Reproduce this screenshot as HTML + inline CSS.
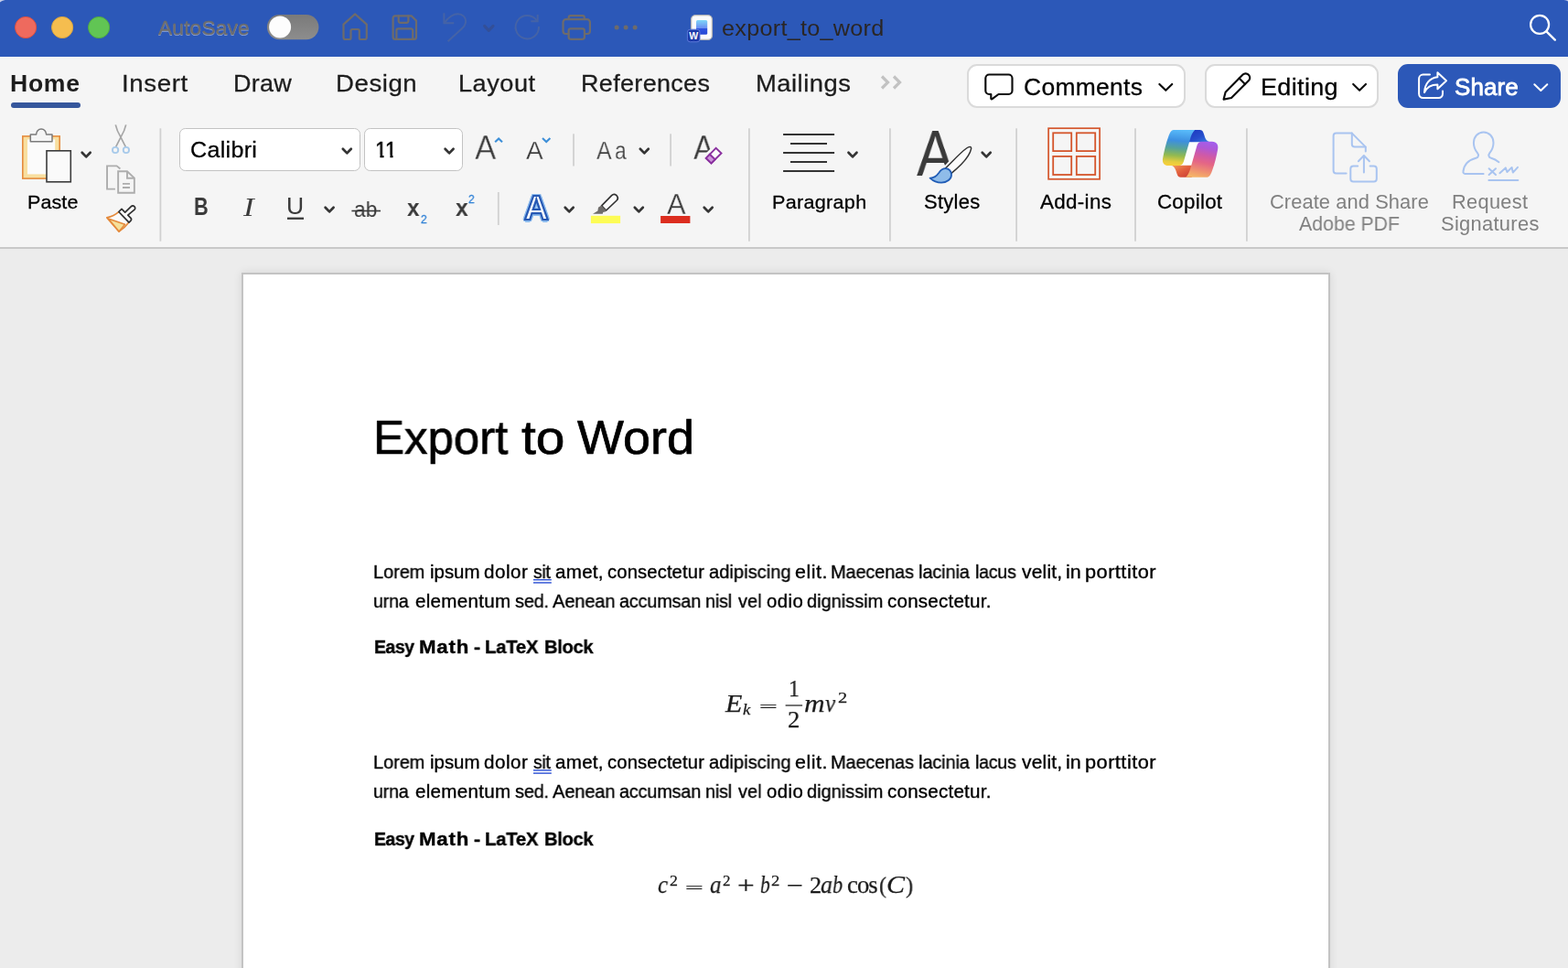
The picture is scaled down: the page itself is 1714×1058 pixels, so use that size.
<!DOCTYPE html>
<html lang="en">
<head>
<meta charset="utf-8">
<title>export_to_word</title>
<style>
html,body{margin:0;padding:0}
body{width:1714px;height:1058px;overflow:hidden;position:relative;background:#ececec;
  font-family:"Liberation Sans",sans-serif;color:#1d1d1d}
.t{will-change:transform;position:absolute;white-space:nowrap;line-height:1;margin:0;padding:0;font-weight:400}
.b{font-weight:700}
.ic{color:#3a3a3a}
.thin{-webkit-text-stroke:.55px #f5f5f5}
.thin2{-webkit-text-stroke:.3px #f5f5f5}
.dis{color:#808080}
.d{color:#000;-webkit-text-stroke:.36px #000}
.ttl{-webkit-text-stroke:.7px #000}
h1,h2,p{margin:0}
.m{font-family:"Liberation Serif",serif;color:#1c1c1c;-webkit-text-stroke:.25px #1c1c1c}
.i{font-style:italic}
h2.b{font-weight:700}
.med{-webkit-text-stroke:.28px currentColor}
svg{position:absolute;left:0;top:0;overflow:visible}
.bg{position:absolute;left:0;width:1714px}
#titlebar .bg{top:0;height:62px;background:#2c58b8}
#tabs .bg{top:62px;height:68px;background:#f5f5f5}
#ribbon .bg{top:130px;height:140px;background:#f5f5f5;border-bottom:2px solid #c9c9c9}
#doc .bg{top:272px;height:786px;background:#ececec}
#page{position:absolute;left:264px;top:298px;width:1186px;height:800px;background:#fff;border:2px solid #c3c3c3;margin:0;box-shadow:0 0 9px rgba(0,0,0,.10)}
.btn{position:absolute;top:70px;height:44px;border-radius:11px;background:#fff;border:2px solid #dadada}
.combo{position:absolute;top:140px;height:45.4px;border-radius:6.5px;background:#fff;border:1px solid #c3c3c3}
</style>
</head>
<body>
<header id="titlebar">
<div class="bg"></div>
<svg width="1714" height="62" viewBox="0 0 1714 62" aria-hidden="true">
  <defs>
    <linearGradient id="gTrack" x1="0" y1="0" x2="0" y2="1"><stop offset="0" stop-color="#7a7a7a"/><stop offset="1" stop-color="#8d8d8d"/></linearGradient>
    <linearGradient id="gDoc" x1="0" y1="0" x2="0" y2="1"><stop offset="0" stop-color="#7fd6f8"/><stop offset=".55" stop-color="#6b8ff2"/><stop offset=".56" stop-color="#2f55e0"/><stop offset="1" stop-color="#2447d6"/></linearGradient>
  </defs>
  <path d="M0 0 H5.6 C3.2 .5 1.2 1.4 0 2.6 Z" fill="#c5cdea"/><path d="M1714 0 H1709.6 C1711.4 .3 1713 .8 1714 1.4 Z" fill="#c5cdea"/>
  <circle cx="28.1" cy="30" r="11.6" fill="#ee6a5e" stroke="#e0503f" stroke-width="1"/>
  <circle cx="68.1" cy="30" r="11.6" fill="#f5bd4f" stroke="#dba53f" stroke-width="1"/>
  <circle cx="108.1" cy="30" r="11.6" fill="#61c554" stroke="#51a943" stroke-width="1"/>
  <rect x="291.9" y="16" width="56.5" height="27.2" rx="13.6" fill="url(#gTrack)"/>
  <circle cx="306.1" cy="29.4" r="12" fill="#fdfdfd"/>
  <g fill="none" stroke="#6e6b6b" stroke-width="2.2" stroke-linejoin="round" stroke-linecap="round">
    <path d="M388.1 15.4 L375.5 26.6 V41 a2 2 0 0 0 2 2 H381.9 a1.6 1.6 0 0 0 1.6 -1.6 V33.6 a1.6 1.6 0 0 1 1.6 -1.6 H391.2 a1.6 1.6 0 0 1 1.6 1.6 V41.4 a1.6 1.6 0 0 0 1.6 1.6 H398.8 a2 2 0 0 0 2 -2 V26.6 Z"/>
    <path d="M432 17.3 H449.6 L455 22.6 V40.4 a2.4 2.4 0 0 1 -2.4 2.4 H432 a2.4 2.4 0 0 1 -2.4 -2.4 V19.7 a2.4 2.4 0 0 1 2.4 -2.4 Z"/>
    <path d="M435.7 17.3 V23 a1.8 1.8 0 0 0 1.8 1.8 H444.6 a1.8 1.8 0 0 0 1.8 -1.8 V17.3"/>
    <path d="M433.4 42.8 V33.2 a1.8 1.8 0 0 1 1.8 -1.8 H449.4 a1.8 1.8 0 0 1 1.8 1.8 V42.8"/>
    <path d="M621.7 21 V19.2 a2 2 0 0 1 2 -2 H636.8 a2 2 0 0 1 2 2 V21"/>
    <path d="M621.5 37 H618.5 a3 3 0 0 1 -3 -3 V24.3 a3.2 3.2 0 0 1 3.2 -3.2 H641.7 a3.2 3.2 0 0 1 3.2 3.2 V34 a3 3 0 0 1 -3 3 H639"/>
    <rect x="621.6" y="31.4" width="17.3" height="11.4" rx="2.2"/>
  </g>
  <g fill="#6e6b6b"><circle cx="674.1" cy="30" r="2.5"/><circle cx="684.1" cy="30" r="2.5"/><circle cx="694.1" cy="30" r="2.5"/></g>
  <g fill="none" stroke="#4563a6" stroke-width="2" stroke-linecap="butt">
    <path d="M485.4 14.2 V25.2 H496.2"/>
    <path d="M486 24.6 C490.5 18.6 495.5 15.2 500.6 15.2 C505.6 15.2 509.1 18.9 509.1 23.4 C509.1 26.6 507.6 28.8 504.6 31.6 L489.6 45.2"/>
    <path d="M587.7 16 V23.3 H580.3"/>
    <path d="M587 22.8 A12.7 12.7 0 1 0 589 29"/>
  </g>
  <path d="M529.6 28.4 L534.3 33.4 L539 28.4" fill="none" stroke="#334f98" stroke-width="3.1" stroke-linecap="round" stroke-linejoin="round"/>
  <rect x="755.6" y="16.6" width="22.8" height="26.8" rx="4.5" fill="#fbfbfb" stroke="#b5b5b5" stroke-width="1.3"/>
  <rect x="761" y="22" width="12.2" height="15.8" rx="1.5" fill="url(#gDoc)"/>
  <rect x="751.4" y="32.2" width="13.6" height="13.6" rx="3" fill="#1c3aa9" stroke="#5b78d8" stroke-width="1"/>
  <text x="758.2" y="43.4" text-anchor="middle" font-family="Liberation Sans, sans-serif" font-weight="700" font-size="10.5" fill="#fff">W</text>
  <circle cx="1683.1" cy="26.9" r="10" fill="none" stroke="#fff" stroke-width="2.2"/>
  <path d="M1690.4 34.4 L1699.8 43.6" stroke="#fff" stroke-width="2.4" stroke-linecap="round"/>
</svg>
<span class="t" id="autosave" style="color:#6d6d6d;-webkit-text-stroke:.35px #6d6d6d;text-shadow:0 1.2px 0 rgba(225,232,250,.55);left:172.86px;top:20.20px;font-size:22.6px;letter-spacing:0.144px;transform:scaleX(1.0073);transform-origin:0 0">AutoSave</span>
<span class="t" id="doctitle" style="color:#2a2625;left:789.18px;top:18.70px;font-size:24.6px;letter-spacing:0.271px;transform:scaleX(1.0245);transform-origin:0 0">export_to_word</span>
</header>
<nav id="tabs">
<div class="bg"></div>
<span class="t b" id="tabHome" style="left:11.32px;top:78.00px;font-size:26px;letter-spacing:0.679px;transform:scaleX(1.0231);transform-origin:0 0">Home</span>
<span class="t med" id="tabInsert" style="left:132.87px;top:78.00px;font-size:26px;letter-spacing:0.585px;transform:scaleX(1.0630);transform-origin:0 0">Insert</span>
<span class="t med" id="tabDraw" style="left:254.93px;top:78.00px;font-size:26px;letter-spacing:0.303px;transform:scaleX(1.0367);transform-origin:0 0">Draw</span>
<span class="t med" id="tabDesign" style="left:366.88px;top:78.00px;font-size:26px;letter-spacing:0.510px;transform:scaleX(1.0622);transform-origin:0 0">Design</span>
<span class="t med" id="tabLayout" style="left:500.91px;top:78.00px;font-size:26px;letter-spacing:0.498px;transform:scaleX(1.0442);transform-origin:0 0">Layout</span>
<span class="t med" id="tabRefs" style="left:634.93px;top:78.00px;font-size:26px;letter-spacing:0.358px;transform:scaleX(1.0346);transform-origin:0 0">References</span>
<span class="t med" id="tabMail" style="left:825.90px;top:78.00px;font-size:26px;letter-spacing:0.487px;transform:scaleX(1.0523);transform-origin:0 0">Mailings</span>
<div style="position:absolute;left:12px;top:112px;width:76px;height:6px;border-radius:3px;background:#35569c"></div>
<div class="btn" style="left:1057px;width:235px"></div>
<div class="btn" style="left:1317px;width:186px"></div>
<div class="btn" style="left:1528px;width:174px;background:#2c58b8;border-color:#2c58b8"></div>
<svg width="1714" height="130" viewBox="0 0 1714 130" aria-hidden="true">
  <g fill="none" stroke="#c2c2c2" stroke-width="3.2" stroke-linecap="butt" stroke-linejoin="miter">
    <path d="M964 83.5 L970.5 90 L964 96.5"/><path d="M977 83.5 L983.5 90 L977 96.5"/>
  </g>
  <g fill="none" stroke="#0d0d0d" stroke-width="2.15" stroke-linejoin="round" stroke-linecap="round">
    <path d="M1081.3 81.5 H1102.5 a4 4 0 0 1 4 4 V99 a4 4 0 0 1 -4 4 H1091.5 L1084.6 108.2 a.8 .8 0 0 1 -1.3 -.7 V103 H1081.3 a4 4 0 0 1 -4 -4 V85.5 a4 4 0 0 1 4 -4 Z"/>
    <path d="M1267.4 92 L1274.3 98.8 L1281.2 92"/>
    <path d="M1479.2 92 L1486.1 98.8 L1493 92"/>
    <path d="M1337.6 108.6 L1339.6 100.8 L1358.6 81.6 a4.2 4.2 0 0 1 6 0 L1365 82 a4.2 4.2 0 0 1 0 6 L1346 107 Z"/>
    <path d="M1354.6 85.6 L1361 92"/>
  </g>
  <g fill="none" stroke="#fff" stroke-width="2" stroke-linejoin="round" stroke-linecap="round">
    <path d="M1677.3 92.2 L1684.3 99 L1691.3 92.2"/>
    <path d="M1563 81.6 H1555.5 a4.4 4.4 0 0 0 -4.4 4.4 V102.6 a4.4 4.4 0 0 0 4.4 4.4 H1572.6 a4.4 4.4 0 0 0 4.4 -4.4 V99.6"/>
    <path d="M1571.4 79.2 L1581 88.2 L1571.4 97.2 V92.4 C1564 92.4 1559.4 95.6 1557 101 C1557.4 91.6 1563 85 1571.4 84.2 Z"/>
  </g>
</svg>
<span class="t med" id="btnComments" style="color:#000;left:1118.98px;top:81.90px;font-size:26px;letter-spacing:0.310px;transform:scaleX(1.0159);transform-origin:0 0">Comments</span>
<span class="t med" id="btnEditing" style="color:#000;left:1377.92px;top:81.90px;font-size:26px;letter-spacing:0.318px;transform:scaleX(1.0392);transform-origin:0 0">Editing</span>
<span class="t" id="btnShare" style="color:#fff;-webkit-text-stroke:.8px #fff;left:1590.18px;top:81.80px;font-size:26px;letter-spacing:0.103px;transform:scaleX(0.9998);transform-origin:0 0">Share</span>
</nav>
<section id="ribbon">
<div class="bg"></div>
<div class="combo" style="left:196.2px;width:195.6px"></div>
<div class="combo" style="left:398.3px;width:105.4px"></div>
<svg width="1714" height="272" viewBox="0 0 1714 272" aria-hidden="true">
  <defs>
    <path id="chev" d="M-4.5 -2.3 L0 2.4 L4.5 -2.3" fill="none" stroke="#343434" stroke-width="2.7" stroke-linecap="round" stroke-linejoin="round"/>
    <linearGradient id="cpL" x1=".5" y1="0" x2=".42" y2="1"><stop offset="0" stop-color="#58baf9"/><stop offset=".3" stop-color="#3d8fe0"/><stop offset=".52" stop-color="#58a496"/><stop offset=".72" stop-color="#93ba50"/><stop offset=".9" stop-color="#e6cd3e"/><stop offset="1" stop-color="#f6cf3c"/></linearGradient>
    <linearGradient id="cpR" x1=".6" y1="0" x2=".4" y2="1"><stop offset="0" stop-color="#f5b266"/><stop offset=".2" stop-color="#ee8c72"/><stop offset=".42" stop-color="#e46586"/><stop offset=".62" stop-color="#d05aa6"/><stop offset=".82" stop-color="#b058d4"/><stop offset="1" stop-color="#a45eea"/></linearGradient>
    <linearGradient id="cpT" x1="0" y1="0" x2="1" y2="1"><stop offset="0" stop-color="#1b36be"/><stop offset=".55" stop-color="#274fcd"/><stop offset="1" stop-color="#3a82e2"/></linearGradient>
    <linearGradient id="cpB" x1="0" y1="0" x2="1" y2="1"><stop offset="0" stop-color="#c9382f"/><stop offset=".5" stop-color="#e2603e"/><stop offset="1" stop-color="#f4a25e"/></linearGradient>
  </defs>
  <!-- group separators -->
  <g fill="#d1d1d1">
    <rect x="174.5" y="140.3" width="1.8" height="123.4"/>
    <rect x="818" y="140.3" width="1.8" height="123.4"/>
    <rect x="972" y="140.3" width="1.8" height="123.4"/>
    <rect x="1110.2" y="140.3" width="1.8" height="123.4"/>
    <rect x="1240.1" y="140.3" width="1.8" height="123.4"/>
    <rect x="1362" y="140.3" width="1.8" height="123.4"/>
    <rect x="626.1" y="146.3" width="1.8" height="35.2"/>
    <rect x="732.2" y="146.3" width="1.8" height="35.2"/>
    <rect x="543.9" y="210" width="1.8" height="36"/>
  </g>
  <!-- chevrons -->
  <use href="#chev" x="94.2" y="169"/><use href="#chev" x="379.3" y="165"/><use href="#chev" x="491.1" y="165"/>
  <use href="#chev" x="360.1" y="229"/><use href="#chev" x="704.3" y="165"/><use href="#chev" x="622.2" y="229"/>
  <use href="#chev" x="698.3" y="229"/><use href="#chev" x="774.2" y="229"/><use href="#chev" x="932" y="169"/>
  <use href="#chev" x="1078.2" y="169"/>
  <!-- paste -->
  <rect x="24.8" y="148.9" width="40.4" height="46.2" fill="#f8dfa0" stroke="#e58c3f" stroke-width="1.6"/>
  <rect x="30" y="152.4" width="30.2" height="38" fill="#fbfbfb"/>
  <path d="M33.3 154.7 V147 H39.6 C39.6 143.6 42 141 45.1 141 C48.2 141 50.6 143.6 50.6 147 H57 V154.7 Z" fill="#f5f5f5" stroke="#7b7b7b" stroke-width="1.5" stroke-linejoin="round"/>
  <rect x="51" y="164.8" width="26.3" height="34" fill="#fafafa" stroke="#3b3b3b" stroke-width="1.6"/>
  <!-- cut -->
  <g fill="none">
    <path d="M126.3 136.4 Q127.8 143 131.7 149.4 L137.4 160.7 M137.7 136.4 Q136.2 143 132.3 149.4 L126.6 160.7" stroke="#a6a6a6" stroke-width="1.7"/>
    <circle cx="126.1" cy="164" r="3.15" stroke="#a8caea" stroke-width="1.9"/><circle cx="137.9" cy="164" r="3.15" stroke="#a8caea" stroke-width="1.9"/>
  </g>
  <!-- copy -->
  <g fill="none" stroke="#adadad" stroke-width="1.9">
    <path d="M125.9 206.65 H117.05 V181.35 H127.6 L131.4 184.4"/>
    <path d="M129.15 187.25 H139 L146.85 194.6 V210.75 H129.15 Z" fill="#f5f5f5"/><path d="M139 187.25 V194.7 H146.85"/>
    <path d="M134 200.9 H142 M134 205 H142"/>
  </g>
  <!-- format painter -->
  <g stroke-linejoin="round">
    <path d="M129.6 231.6 C126 235 121 237 116.8 237.9 L130.1 253.2 C134.5 250.4 138 246.8 140.8 243" fill="#fbfbfb" stroke="#e48a3c" stroke-width="1.6"/>
    <path d="M118.4 238.9 L136.6 245.2 L130.1 253 Z" fill="#f5e09a" stroke="#e48a3c" stroke-width="1.6"/>
    <path d="M129.8 231.5 L133 228.4 L136.7 232.1 L143.4 225.6 a2.4 2.4 0 0 1 3.4 0 L147 225.8 a2.4 2.4 0 0 1 0 3.4 L139.8 235.2 L142.8 238.2 a2.3 2.3 0 0 1 0 3.2 L141 243.1 Z" fill="#fbfbfb" stroke="#2f2f2f" stroke-width="1.7"/>
  </g>
  <!-- underline / strike marks -->
  <rect x="314" y="237.6" width="18" height="2.3" fill="#3a3a3a"/>
  <rect x="384.4" y="229.7" width="31.6" height="1.6" fill="#3a3a3a"/>
  <!-- grow / shrink carets -->
  <g fill="none" stroke="#3d8fd8" stroke-width="2.1" stroke-linejoin="miter">
    <path d="M541.2 155.2 L545.1 151.4 L549 155.2"/><path d="M593 151 L597.2 155 L601.4 151"/>
  </g>
  <!-- highlighter -->
  <rect x="645.9" y="235.8" width="32.2" height="8.3" fill="#fdfc55"/>
  <path d="M657.6 224.9 L668.6 213.6 C670 212.2 672 212 673.4 213.2 L674.4 214.2 C675.6 215.6 675.5 217.6 674.2 219 L662.6 230 Z" fill="#fbfbfb" stroke="#333" stroke-width="1.7" stroke-linejoin="round"/>
  <path d="M657.3 224.6 L662.8 230.2 L662.1 231.3 L659.2 232.1 L658.8 233.8 L648 233.8 L653.4 230.6 L654 226.7 Z" fill="#6e6c6a"/>
  <!-- font colour -->
  <rect x="722.1" y="236" width="32.3" height="8" fill="#dc2d1f"/>
  <!-- paragraph -->
  <g stroke="#333" stroke-width="2" fill="none">
    <path d="M856.1 146.9 H912.1 M864 156.9 H904 M856.1 167 H912.1 M864 177 H904 M856.1 187.1 H912.1"/>
  </g>
  <!-- add-ins -->
  <g fill="none" stroke="#d4562c">
    <rect x="1146.1" y="140.2" width="56" height="55.6" stroke-width="1.7"/>
    <g stroke-width="1.8"><rect x="1151.2" y="145.3" width="20" height="19.8"/><rect x="1176.8" y="145.3" width="20.4" height="19.8"/><rect x="1151.2" y="170.9" width="20" height="20.1"/><rect x="1176.8" y="170.9" width="20.4" height="20.1"/></g>
  </g>
  <!-- copilot -->
  <g>
    <path d="M1299.6 155 L1310.8 155 L1302.8 181.2 L1289.6 181.2 Z" fill="#fdfdfd"/>
    <path d="M1299.6 142.05 H1311.8 C1314.6 142.05 1315.6 145 1316.4 147.8 C1317.6 152 1319.2 155 1323.4 155.15 H1299.6 Z" fill="url(#cpT)"/>
    <path d="M1299.6 142.05 H1311.8 C1314.6 142.05 1315.6 145 1316.4 147.8 C1317.6 152 1319.2 155 1323.4 155.15 H1299.6 Z" fill="url(#cpB)" transform="rotate(180 1301.15 167.9)"/>
    <path d="M1282.8 142.05 L1306.2 142.05 C1303.4 144.5 1301.8 148.8 1300.7 152.9 L1294.2 175.6 C1293.2 178.8 1292 181.1 1288.6 181.1 L1277.4 181.1 C1272.4 181.1 1270 177.6 1271.2 172.4 C1272.4 166 1274.4 157 1277 150 C1278.4 146 1280 142.05 1282.8 142.05 Z" fill="url(#cpL)"/>
    <path d="M1282.8 142.05 L1306.2 142.05 C1303.4 144.5 1301.8 148.8 1300.7 152.9 L1294.2 175.6 C1293.2 178.8 1292 181.1 1288.6 181.1 L1277.4 181.1 C1272.4 181.1 1270 177.6 1271.2 172.4 C1272.4 166 1274.4 157 1277 150 C1278.4 146 1280 142.05 1282.8 142.05 Z" fill="url(#cpR)" transform="rotate(180 1301.15 167.9)"/>
  </g>
  <!-- create & share pdf -->
  <g fill="none" stroke="#a9c4f0" stroke-width="2" stroke-linecap="round" stroke-linejoin="round">
    <path d="M1471.6 189.6 H1460.6 a3 3 0 0 1 -3 -3 V148.4 a3 3 0 0 1 3 -3 H1477.6 L1492.8 160.6 V165.4"/>
    <path d="M1477.8 145.6 V157.6 a3 3 0 0 0 3 3 H1492.6"/>
    <path d="M1484.2 181.6 H1479.3 a3 3 0 0 0 -3 3 V195.4 a3 3 0 0 0 3 3 H1501.8 a3 3 0 0 0 3 -3 V184.6 a3 3 0 0 0 -3 -3 H1497.6"/>
    <path d="M1490.9 188.6 V170.2 M1484.9 176.2 L1490.9 170 L1496.9 176.2"/>
  </g>
  <!-- request signatures -->
  <g fill="none" stroke="#a9c4f0" stroke-width="2" stroke-linecap="round" stroke-linejoin="round">
    <path d="M1621.6 189.9 H1601.4 a2 2 0 0 1 -2 -2.4 C1600.4 179.6 1606.4 174.6 1613.4 172.8 C1616.4 172 1616.6 169.2 1615 167.2 C1612.4 164 1610.9 160.2 1610.9 156 C1610.9 149.4 1615.6 144.4 1621.7 144.4 C1627.8 144.4 1632.5 149.4 1632.5 156 C1632.5 160.2 1631 164 1628.4 167.2 C1626.8 169.2 1627 172 1630 172.8 C1633 173.6 1636 175.2 1638.4 177.2"/>
    <path d="M1627.6 184.2 L1635 191 M1635 184.2 L1627.6 191"/>
    <path d="M1639.4 189.2 L1645.8 183.4 L1647.4 188 L1652.6 183 L1653.8 188.6 L1659 182.8"/>
    <path d="M1627.4 197.1 H1659.4"/>
  </g>
</svg>
<span class="t med" id="lblPaste" style="color:#000;left:29.97px;top:209.90px;font-size:21px;letter-spacing:0.091px;transform:scaleX(1.0251);transform-origin:0 0">Paste</span>
<span class="t med" id="fontName" style="color:#000;left:207.96px;top:151.90px;font-size:24.2px;letter-spacing:0.292px;transform:scaleX(1.0370);transform-origin:0 0">Calibri</span>
<span class="t" id="fontSize" style="color:#000;-webkit-text-stroke:.5px #000;left:409.69px;top:151.90px;font-size:24.2px;transform:scaleX(0.9344);transform-origin:0 0">11</span>
<span class="t b ic" id="icB" style="left:212.28px;top:212.40px;font-size:28px;transform:scaleX(0.7716);transform-origin:0 0">B</span>
<span class="t ic" id="icI" style="font-family:'Liberation Serif',serif;font-style:italic;left:265.61px;top:211.60px;font-size:29px;transform:scaleX(1.2096);transform-origin:0 0">I</span>
<span class="t ic" id="icU" style="left:313.12px;top:212.40px;font-size:26.5px;transform:scaleX(0.9896);transform-origin:0 0">U</span>
<span class="t ic" id="icAb" style="left:387.08px;top:217.40px;font-size:24.5px;transform:scaleX(0.9252);transform-origin:0 0">ab</span>
<span class="t b ic" id="icSubX" style="left:444.80px;top:213.90px;font-size:26.5px;transform:scaleX(0.9126);transform-origin:0 0">x</span>
<span class="t ic med" id="icSub2" style="color:#2f80d6;left:460.00px;top:233.60px;font-size:12.5px;transform:scaleX(0.9585);transform-origin:0 0">2</span>
<span class="t b ic" id="icSupX" style="left:497.60px;top:213.90px;font-size:26.5px;transform:scaleX(0.9333);transform-origin:0 0">x</span>
<span class="t ic med" id="icSup2" style="color:#2f80d6;left:512.40px;top:211.80px;font-size:12.5px;transform:scaleX(0.9585);transform-origin:0 0">2</span>
<span class="t ic thin" id="icGrow" style="left:519.32px;top:142.75px;font-size:37.2px;transform:scaleX(0.9389);transform-origin:0 0">A</span>
<span class="t ic thin2" id="icShrink" style="left:574.53px;top:149.75px;font-size:28.2px;transform:scaleX(0.9919);transform-origin:0 0">A</span>
<span class="t ic thin2" id="icCase" style="left:651.94px;top:149.75px;font-size:28.2px;transform:scaleX(0.8854);transform-origin:0 0">A</span><span class="t ic thin2" id="icCase2" style="left:671.73px;top:151.75px;font-size:27px;transform:scaleX(0.8440);transform-origin:0 0">a</span>
<span class="t ic thin2" id="icClear" style="left:757.73px;top:142.50px;font-size:37px;transform:scaleX(0.9036);transform-origin:0 0">A</span>
<span class="t b" id="icFx" style="color:#fff;-webkit-text-stroke:2.2px #2759b4;text-shadow:2.5px 0 .5px #8dbcee,-2.5px 0 .5px #8dbcee,0 2.5px .5px #8dbcee,0 -2.5px .5px #8dbcee,1.8px 1.8px .5px #8dbcee,-1.8px 1.8px .5px #8dbcee,1.8px -1.8px .5px #8dbcee,-1.8px -1.8px .5px #8dbcee;left:572.80px;top:209.60px;font-size:36px;transform:scaleX(1.0231);transform-origin:0 0">A</span>
<span class="t ic thin2" id="icColor" style="left:728.53px;top:207.75px;font-size:31.2px;transform:scaleX(0.9879);transform-origin:0 0">A</span>
<span class="t med" id="lblPara" style="color:#000;left:844.37px;top:210.00px;font-size:21px;letter-spacing:0.285px;transform:scaleX(1.0281);transform-origin:0 0">Paragraph</span>
<span class="t ic" id="icStyles" style="left:1001.80px;top:131.65px;font-size:71px;transform:scaleX(0.8581);transform-origin:0 0">A</span>
<span class="t med" id="lblStyles" style="color:#000;left:1010.10px;top:210.75px;font-size:21.5px;letter-spacing:0.279px;transform:scaleX(1.0218);transform-origin:0 0">Styles</span>
<span class="t med" id="lblAddins" style="color:#000;left:1136.66px;top:210.75px;font-size:21.5px;letter-spacing:0.312px;transform:scaleX(1.0412);transform-origin:0 0">Add-ins</span>
<span class="t med" id="lblCopilot" style="color:#000;left:1264.96px;top:210.75px;font-size:21.5px;letter-spacing:0.260px;transform:scaleX(1.0368);transform-origin:0 0">Copilot</span>
<span class="t dis" id="lblPdf1" style="left:1387.98px;top:210.75px;font-size:21.5px;letter-spacing:0.088px;transform:scaleX(1.0160);transform-origin:0 0">Create and Share</span>
<span class="t dis" id="lblPdf2" style="left:1420.00px;top:234.75px;font-size:21.5px;letter-spacing:-0.018px;transform:scaleX(0.9921);transform-origin:0 0">Adobe PDF</span>
<span class="t dis" id="lblSig1" style="left:1587.31px;top:210.75px;font-size:21.5px;letter-spacing:0.321px;transform:scaleX(1.0117);transform-origin:0 0">Request</span>
<span class="t dis" id="lblSig2" style="left:1575.00px;top:234.75px;font-size:21.5px;letter-spacing:0.287px;transform:scaleX(1.0189);transform-origin:0 0">Signatures</span>
<svg width="1714" height="272" viewBox="0 0 1714 272" aria-hidden="true" style="z-index:2">
  <path d="M410.9 169.6h4.5v3.6h-4.5z M419.6 169.6h6.8v3.6h-6.8z M429.6 169.6h4.6v3.6h-4.6z" fill="#fff"/>
  <!-- clear-format eraser (covers the cut leg of the A) -->
  <path d="M772.6 166.6 L776.6 162.4 L784 177 L771 177 Z" fill="#f5f5f5"/>
  <g stroke="#8a309f" stroke-width="1.9" stroke-linejoin="miter">
    <path d="M771.8 172.9 L782.6 161.9 L788.5 167.5 L777.5 178.4 Z" fill="#fbfbfb"/>
    <path d="M771.8 172.9 L775.9 168.7 L781.7 174.3 L777.5 178.4 Z" fill="#cb95d9"/>
  </g>
  <!-- styles brush (covers the cut leg of the A) -->
  <path d="M1032.4 181.5 L1037.7 175.8 L1048 175.8 L1048 194 L1031 194 L1031 183 Z" fill="#f5f5f5"/>
  <path d="M1033.6 183.8 C1041 176.6 1050 166.6 1056.6 162 C1059.4 160 1062 159.8 1061.6 162.6 C1060.6 167.4 1055.6 174.6 1050.6 179.8 C1047 183.4 1043.4 186.6 1040 189.4 Z" fill="#fbfbfb" stroke="#333" stroke-width="1.5" stroke-linejoin="round"/>
  <path d="M1016.6 194.6 C1021 194.8 1024 192.2 1026.4 188.8 C1028.4 185.8 1030.6 184.2 1033.6 184.2 C1037.4 184.2 1040 187.2 1040 191 C1040 195.6 1035.4 199.6 1029 199.6 C1023.6 199.6 1019.6 197.4 1016.6 194.6 Z" fill="#8fbce9" stroke="#205cb6" stroke-width="1.8" stroke-linejoin="round"/>
</svg>
</section>
<main id="doc">
<div class="bg"></div>
<article id="page"></article>
<h1 id="docTitle"><span class="t d ttl" style="left:408.29px;top:452.60px;font-size:51.8px;transform:scaleX(0.9841);transform-origin:0 0">Export</span> <span class="t d ttl" style="left:570.20px;top:452.60px;font-size:51.8px;transform:scaleX(1.0972);transform-origin:0 0">to</span> <span class="t d ttl" style="left:631.08px;top:452.60px;font-size:51.8px;transform:scaleX(1.0414);transform-origin:0 0">Word</span></h1>
<p id="p1"><span class="t d" style="left:408.02px;top:614.70px;font-size:20.3px;letter-spacing:-0.058px;transform:scaleX(0.9850);transform-origin:0 0">Lorem</span> <span class="t d" style="left:469.79px;top:614.70px;font-size:20.3px;letter-spacing:-0.005px;transform:scaleX(1.0080);transform-origin:0 0">ipsum</span> <span class="t d" style="left:528.74px;top:614.70px;font-size:20.3px;letter-spacing:0.459px;transform:scaleX(1.0179);transform-origin:0 0">dolor</span> <span class="t d" style="left:583.00px;top:614.70px;font-size:20.3px;letter-spacing:-0.221px;transform:scaleX(0.9463);transform-origin:0 0">sit</span> <span class="t d" style="left:606.66px;top:614.70px;font-size:20.3px;letter-spacing:0.223px;transform:scaleX(1.0185);transform-origin:0 0">amet,</span> <span class="t d" style="left:664.34px;top:614.70px;font-size:20.3px;letter-spacing:0.104px;transform:scaleX(0.9989);transform-origin:0 0">consectetur</span> <span class="t d" style="left:775.48px;top:614.70px;font-size:20.3px;letter-spacing:0.012px;transform:scaleX(0.9925);transform-origin:0 0">adipiscing</span> <span class="t d" style="left:868.84px;top:614.70px;font-size:20.3px;letter-spacing:0.498px;transform:scaleX(1.0576);transform-origin:0 0">elit.</span> <span class="t d" style="left:907.82px;top:614.70px;font-size:20.3px;letter-spacing:-0.145px;transform:scaleX(0.9829);transform-origin:0 0">Maecenas</span> <span class="t d" style="left:1004.22px;top:614.70px;font-size:20.3px;letter-spacing:-0.115px;transform:scaleX(0.9841);transform-origin:0 0">lacinia</span> <span class="t d" style="left:1066.23px;top:614.70px;font-size:20.3px;letter-spacing:-0.269px;transform:scaleX(0.9675);transform-origin:0 0">lacus</span> <span class="t d" style="left:1116.86px;top:614.70px;font-size:20.3px;letter-spacing:0.194px;transform:scaleX(1.0349);transform-origin:0 0">velit,</span> <span class="t d" style="left:1165.34px;top:614.70px;font-size:20.3px;letter-spacing:-0.078px;transform:scaleX(1.0575);transform-origin:0 0">in</span> <span class="t d" style="left:1186.33px;top:614.70px;font-size:20.3px;letter-spacing:0.442px;transform:scaleX(1.0723);transform-origin:0 0">porttitor</span>
<span class="t d" style="left:408.03px;top:646.70px;font-size:20.3px;letter-spacing:-0.202px;transform:scaleX(0.9671);transform-origin:0 0">urna</span> <span class="t d" style="left:453.91px;top:646.70px;font-size:20.3px;letter-spacing:0.270px;transform:scaleX(1.0167);transform-origin:0 0">elementum</span> <span class="t d" style="left:563.20px;top:646.70px;font-size:20.3px;letter-spacing:-0.254px;transform:scaleX(0.9837);transform-origin:0 0">sed.</span> <span class="t d" style="left:604.27px;top:646.70px;font-size:20.3px;letter-spacing:-0.151px;transform:scaleX(0.9891);transform-origin:0 0">Aenean</span> <span class="t d" style="left:677.08px;top:646.70px;font-size:20.3px;letter-spacing:-0.175px;transform:scaleX(0.9786);transform-origin:0 0">accumsan</span> <span class="t d" style="left:771.23px;top:646.70px;font-size:20.3px;letter-spacing:-0.116px;transform:scaleX(0.9704);transform-origin:0 0">nisl</span> <span class="t d" style="left:807.05px;top:646.70px;font-size:20.3px;letter-spacing:0.116px;transform:scaleX(0.9759);transform-origin:0 0">vel</span> <span class="t d" style="left:837.55px;top:646.70px;font-size:20.3px;letter-spacing:0.444px;transform:scaleX(1.0037);transform-origin:0 0">odio</span> <span class="t d" style="left:881.96px;top:646.70px;font-size:20.3px;letter-spacing:-0.005px;transform:scaleX(0.9868);transform-origin:0 0">dignissim</span> <span class="t d" style="left:969.92px;top:646.70px;font-size:20.3px;letter-spacing:0.202px;transform:scaleX(1.0160);transform-origin:0 0">consectetur.</span></p>
<h2 id="h2a"><span class="t d b" style="left:408.67px;top:696.80px;font-size:20.9px;letter-spacing:-0.563px;transform:scaleX(0.9344);transform-origin:0 0">Easy</span> <span class="t d b" style="left:457.53px;top:696.80px;font-size:20.9px;letter-spacing:0.735px;transform:scaleX(1.0654);transform-origin:0 0">Math</span> <span class="t d b" style="left:518.00px;top:696.80px;font-size:20.9px;transform:scaleX(1.0252);transform-origin:0 0">-</span> <span class="t d b" style="left:529.82px;top:696.80px;font-size:20.9px;letter-spacing:-0.273px;transform:scaleX(0.9750);transform-origin:0 0">LaTeX</span> <span class="t d b" style="left:594.84px;top:696.80px;font-size:20.9px;letter-spacing:-0.315px;transform:scaleX(0.9630);transform-origin:0 0">Block</span></h2>
<p id="p2"><span class="t d" style="left:408.02px;top:822.90px;font-size:20.3px;letter-spacing:-0.058px;transform:scaleX(0.9850);transform-origin:0 0">Lorem</span> <span class="t d" style="left:469.79px;top:822.90px;font-size:20.3px;letter-spacing:-0.005px;transform:scaleX(1.0080);transform-origin:0 0">ipsum</span> <span class="t d" style="left:528.74px;top:822.90px;font-size:20.3px;letter-spacing:0.459px;transform:scaleX(1.0179);transform-origin:0 0">dolor</span> <span class="t d" style="left:583.00px;top:822.90px;font-size:20.3px;letter-spacing:-0.221px;transform:scaleX(0.9463);transform-origin:0 0">sit</span> <span class="t d" style="left:606.66px;top:822.90px;font-size:20.3px;letter-spacing:0.223px;transform:scaleX(1.0185);transform-origin:0 0">amet,</span> <span class="t d" style="left:664.34px;top:822.90px;font-size:20.3px;letter-spacing:0.104px;transform:scaleX(0.9989);transform-origin:0 0">consectetur</span> <span class="t d" style="left:775.48px;top:822.90px;font-size:20.3px;letter-spacing:0.012px;transform:scaleX(0.9925);transform-origin:0 0">adipiscing</span> <span class="t d" style="left:868.84px;top:822.90px;font-size:20.3px;letter-spacing:0.498px;transform:scaleX(1.0576);transform-origin:0 0">elit.</span> <span class="t d" style="left:907.82px;top:822.90px;font-size:20.3px;letter-spacing:-0.145px;transform:scaleX(0.9829);transform-origin:0 0">Maecenas</span> <span class="t d" style="left:1004.22px;top:822.90px;font-size:20.3px;letter-spacing:-0.115px;transform:scaleX(0.9841);transform-origin:0 0">lacinia</span> <span class="t d" style="left:1066.23px;top:822.90px;font-size:20.3px;letter-spacing:-0.269px;transform:scaleX(0.9675);transform-origin:0 0">lacus</span> <span class="t d" style="left:1116.86px;top:822.90px;font-size:20.3px;letter-spacing:0.194px;transform:scaleX(1.0349);transform-origin:0 0">velit,</span> <span class="t d" style="left:1165.34px;top:822.90px;font-size:20.3px;letter-spacing:-0.078px;transform:scaleX(1.0575);transform-origin:0 0">in</span> <span class="t d" style="left:1186.33px;top:822.90px;font-size:20.3px;letter-spacing:0.442px;transform:scaleX(1.0723);transform-origin:0 0">porttitor</span>
<span class="t d" style="left:408.03px;top:854.70px;font-size:20.3px;letter-spacing:-0.202px;transform:scaleX(0.9671);transform-origin:0 0">urna</span> <span class="t d" style="left:453.91px;top:854.70px;font-size:20.3px;letter-spacing:0.270px;transform:scaleX(1.0167);transform-origin:0 0">elementum</span> <span class="t d" style="left:563.20px;top:854.70px;font-size:20.3px;letter-spacing:-0.254px;transform:scaleX(0.9837);transform-origin:0 0">sed.</span> <span class="t d" style="left:604.27px;top:854.70px;font-size:20.3px;letter-spacing:-0.151px;transform:scaleX(0.9891);transform-origin:0 0">Aenean</span> <span class="t d" style="left:677.08px;top:854.70px;font-size:20.3px;letter-spacing:-0.175px;transform:scaleX(0.9786);transform-origin:0 0">accumsan</span> <span class="t d" style="left:771.23px;top:854.70px;font-size:20.3px;letter-spacing:-0.116px;transform:scaleX(0.9704);transform-origin:0 0">nisl</span> <span class="t d" style="left:807.05px;top:854.70px;font-size:20.3px;letter-spacing:0.116px;transform:scaleX(0.9759);transform-origin:0 0">vel</span> <span class="t d" style="left:837.55px;top:854.70px;font-size:20.3px;letter-spacing:0.444px;transform:scaleX(1.0037);transform-origin:0 0">odio</span> <span class="t d" style="left:881.96px;top:854.70px;font-size:20.3px;letter-spacing:-0.005px;transform:scaleX(0.9868);transform-origin:0 0">dignissim</span> <span class="t d" style="left:969.92px;top:854.70px;font-size:20.3px;letter-spacing:0.202px;transform:scaleX(1.0160);transform-origin:0 0">consectetur.</span></p>
<h2 id="h2b"><span class="t d b" style="left:408.67px;top:906.80px;font-size:20.9px;letter-spacing:-0.563px;transform:scaleX(0.9344);transform-origin:0 0">Easy</span> <span class="t d b" style="left:457.53px;top:906.80px;font-size:20.9px;letter-spacing:0.735px;transform:scaleX(1.0654);transform-origin:0 0">Math</span> <span class="t d b" style="left:518.00px;top:906.80px;font-size:20.9px;transform:scaleX(1.0252);transform-origin:0 0">-</span> <span class="t d b" style="left:529.82px;top:906.80px;font-size:20.9px;letter-spacing:-0.273px;transform:scaleX(0.9750);transform-origin:0 0">LaTeX</span> <span class="t d b" style="left:594.84px;top:906.80px;font-size:20.9px;letter-spacing:-0.315px;transform:scaleX(0.9630);transform-origin:0 0">Block</span></h2>
<svg width="1714" height="1058" viewBox="0 0 1714 1058" aria-hidden="true">
  <g fill="#2a4fd4">
    <rect x="583" y="633" width="19.8" height="1.4"/><rect x="583" y="636.2" width="19.8" height="1.4"/>
    <rect x="583" y="841.2" width="19.8" height="1.4"/><rect x="583" y="844.4" width="19.8" height="1.4"/>
  </g>
  <rect x="858.6" y="770.4" width="18.5" height="1.2" fill="#1a1a1a"/>
</svg>
<div id="eq1" class="eq">
<span class="t m i" style="left:793.16px;top:756.10px;font-size:26.7px;transform:scaleX(1.1267);transform-origin:0 0">E</span>
<span class="t m i" style="left:812.00px;top:767.00px;font-size:17.4px;transform:scaleX(1.0778);transform-origin:0 0">k</span>
<span class="t m" style="left:830.20px;top:763.90px;font-size:17.6px;transform:scaleX(1.9969);transform-origin:0 0">=</span>
<span class="t m" style="left:862.30px;top:741.00px;font-size:24.6px;transform:scaleX(0.9609);transform-origin:0 0">1</span>
<span class="t m" style="left:861.30px;top:774.70px;font-size:24.6px;transform:scaleX(1.0862);transform-origin:0 0">2</span>
<span class="t m i" style="left:879.02px;top:756.10px;font-size:26.7px;transform:scaleX(1.1759);transform-origin:0 0">m</span><span class="t m i" style="left:902.40px;top:756.10px;font-size:26.7px;transform:scaleX(0.9426);transform-origin:0 0">v</span>
<span class="t m" style="left:915.70px;top:753.50px;font-size:17.6px;transform:scaleX(1.1634);transform-origin:0 0">2</span>
</div>
<div id="eq2" class="eq">
<span class="t m i" style="left:719.29px;top:954.40px;font-size:26.7px;transform:scaleX(0.9380);transform-origin:0 0">c</span>
<span class="t m" style="left:731.80px;top:953.50px;font-size:17px;transform:scaleX(1.0509);transform-origin:0 0">2</span>
<span class="t m" style="left:748.80px;top:962.20px;font-size:17.6px;transform:scaleX(1.9969);transform-origin:0 0">=</span>
<span class="t m i" style="left:775.73px;top:954.40px;font-size:26.7px;transform:scaleX(0.9321);transform-origin:0 0">a</span>
<span class="t m" style="left:790.20px;top:953.50px;font-size:17px">2</span>
<span class="t m" style="left:806.19px;top:954.40px;font-size:28px;transform:scaleX(1.1860);transform-origin:0 0">+</span>
<span class="t m i" style="left:831.25px;top:954.40px;font-size:26.7px;transform:scaleX(0.7982);transform-origin:0 0">b</span>
<span class="t m" style="left:842.53px;top:953.50px;font-size:17px;transform:scaleX(1.1023);transform-origin:0 0">2</span>
<span class="t m" style="left:860.31px;top:954.40px;font-size:28px;transform:scaleX(1.1459);transform-origin:0 0">&#8722;</span>
<span class="t m" style="left:884.60px;top:955.40px;font-size:25.4px;transform:scaleX(1.0364);transform-origin:0 0">2</span>
<span class="t m i" style="left:896.91px;top:954.40px;font-size:26.7px;transform:scaleX(0.9673);transform-origin:0 0">a</span><span class="t m i" style="left:910.00px;top:954.40px;font-size:26.7px;transform:scaleX(0.8331);transform-origin:0 0">b</span>
<span class="t m" style="left:926.13px;top:954.40px;font-size:26.7px;letter-spacing:-0.932px">cos</span>
<span class="t m" style="left:961.32px;top:955.40px;font-size:26px;transform:scaleX(0.9249);transform-origin:0 0">(</span>
<span class="t m i" style="left:968.71px;top:954.40px;font-size:26.7px;transform:scaleX(1.1264);transform-origin:0 0">C</span>
<span class="t m" style="left:989.69px;top:955.40px;font-size:26px;transform:scaleX(0.9367);transform-origin:0 0">)</span>
</div>
</main>
</body>
</html>
